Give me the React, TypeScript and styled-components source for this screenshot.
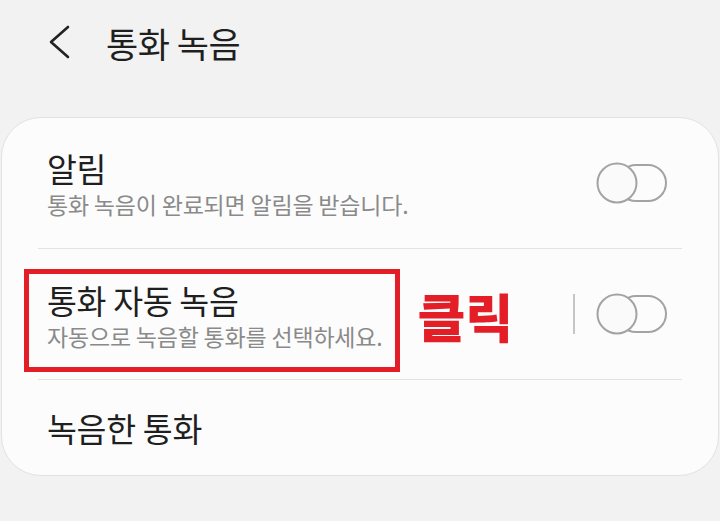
import React from "react";
import styled, { createGlobalStyle } from "styled-components";

const Global = createGlobalStyle`
  html, body { margin: 0; padding: 0; background: #f2f2f2; }
  body { font-family: "Noto Sans CJK KR", "Noto Sans", sans-serif; }
`;

const Page = styled.div`
  width: 720px;
  height: 521px;
  background: #f2f2f2;
  overflow: hidden;
`;

const Header = styled.header`
  height: 84px;
  display: flex;
  align-items: center;
  padding-left: 48px;
  gap: 34px;
`;

const BackButton = styled.button`
  width: 24px;
  height: 36px;
  padding: 0;
  border: none;
  background: none;
  display: flex;
  align-items: center;
  justify-content: center;
`;

const Title = styled.h1`
  margin: 0;
  font-size: 35px;
  font-weight: 400;
  color: #1f1f1f;
  letter-spacing: -0.5px;
`;

const Card = styled.section`
  margin: 33px 1px 0;
  background: #fcfcfc;
  border: 1px solid #e2e2e2;
  border-radius: 40px;
  overflow: hidden;
`;

const Row = styled.div<{ $h: number }>`
  height: ${(p) => p.$h}px;
  display: flex;
  align-items: center;
  padding: 0 50px 0 22px;
`;

const Divider = styled.div`
  height: 1px;
  margin: 0 36px;
  background: #e3e3e3;
`;

const TextBlock = styled.div<{ $boxed?: boolean }>`
  display: flex;
  flex-direction: column;
  border: 5px solid ${(p) => (p.$boxed ? "#e41e26" : "transparent")};
  padding: ${(p) => (p.$boxed ? "5px 13px 16px 18px" : "0 18px")};
  margin-top: ${(p) => (p.$boxed ? "12px" : "0")};
`;

const ItemTitle = styled.div`
  font-size: 32.5px;
  line-height: 42px;
  color: #1f1f1f;
  letter-spacing: -0.3px;
`;

const ItemSub = styled.div`
  font-size: 23px;
  line-height: 30px;
  color: #8a8a8a;
  letter-spacing: -0.2px;
`;

const ClickLabel = styled.span`
  margin-left: 17px;
  font-size: 52px;
  font-weight: 900;
  color: #e41e26;
  line-height: 1;
  margin-top: 4px;
`;

const Spacer = styled.div`
  flex: 1;
`;

const VRule = styled.div`
  width: 2px;
  height: 40px;
  background: #c6c6c6;
  margin-right: 21px;
`;

const ToggleBox = styled.div`
  width: 72px;
  height: 42px;
  display: flex;
`;

const Toggle = () => (
  <ToggleBox>
    <svg width="72" height="42" viewBox="0 0 72 42">
      <rect x="22" y="3" width="48" height="36" rx="18" fill="none" stroke="#a3a3a3" strokeWidth="2" />
      <circle cx="21" cy="21" r="19.5" fill="#fafafa" stroke="#a3a3a3" strokeWidth="2" />
    </svg>
  </ToggleBox>
);

export default function App() {
  return (
    <Page>
      <Global />
      <Header>
        <BackButton aria-label="back">
          <svg width="22" height="34" viewBox="0 0 22 34">
            <polyline points="19,2 2,17 19,32" fill="none" stroke="#222" strokeWidth="2.6" strokeLinecap="round" strokeLinejoin="round" />
          </svg>
        </BackButton>
        <Title>통화 녹음</Title>
      </Header>
      <Card>
        <Row $h={130}>
          <TextBlock>
            <ItemTitle>알림</ItemTitle>
            <ItemSub>통화 녹음이 완료되면 알림을 받습니다.</ItemSub>
          </TextBlock>
          <Spacer />
          <Toggle />
        </Row>
        <Divider />
        <Row $h={130}>
          <TextBlock $boxed>
            <ItemTitle>통화 자동 녹음</ItemTitle>
            <ItemSub>자동으로 녹음할 통화를 선택하세요.</ItemSub>
          </TextBlock>
          <ClickLabel>클릭</ClickLabel>
          <Spacer />
          <VRule />
          <Toggle />
        </Row>
        <Divider />
        <Row $h={95}>
          <TextBlock>
            <ItemTitle>녹음한 통화</ItemTitle>
          </TextBlock>
        </Row>
      </Card>
    </Page>
  );
}
